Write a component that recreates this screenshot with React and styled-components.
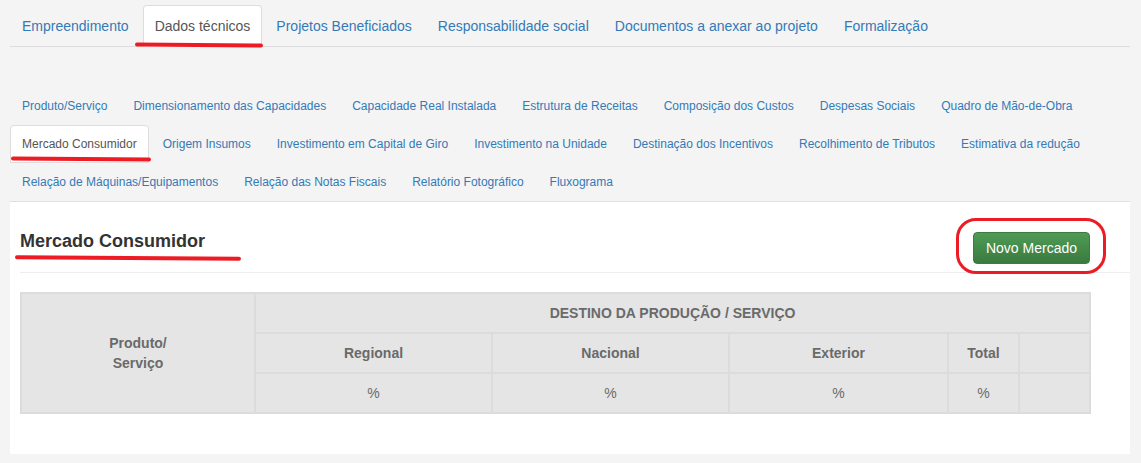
import React from "react";
import styled, { createGlobalStyle } from "styled-components";

const GlobalStyle = createGlobalStyle`
  * { box-sizing: border-box; }
  body {
    margin: 0;
    background: #f4f4f4;
    font-family: "Liberation Sans", Arial, sans-serif;
    color: #333;
  }
`;

const mainTabs = [
  "Empreendimento",
  "Dados técnicos",
  "Projetos Beneficiados",
  "Responsabilidade social",
  "Documentos a anexar ao projeto",
  "Formalização"
];

const subTabs = [
  "Produto/Serviço",
  "Dimensionamento das Capacidades",
  "Capacidade Real Instalada",
  "Estrutura de Receitas",
  "Composição dos Custos",
  "Despesas Sociais",
  "Quadro de Mão-de-Obra",
  "Mercado Consumidor",
  "Origem Insumos",
  "Investimento em Capital de Giro",
  "Investimento na Unidade",
  "Destinação dos Incentivos",
  "Recolhimento de Tributos",
  "Estimativa da redução",
  "Relação de Máquinas/Equipamentos",
  "Relação das Notas Fiscais",
  "Relatório Fotográfico",
  "Fluxograma"
];

export default function App() {
  return (
    <Page>
      <GlobalStyle />
      <MainNav>
        {mainTabs.map((t) => (
          <MainTab key={t} $active={t === "Dados técnicos"}>
            {t}
          </MainTab>
        ))}
      </MainNav>

      <SubNav>
        {subTabs.map((t) => (
          <SubTab key={t} $active={t === "Mercado Consumidor"}>
            {t}
          </SubTab>
        ))}
      </SubNav>

      <Panel>
        <HeaderRow>
          <Heading>Mercado Consumidor</Heading>
          <Button>Novo Mercado</Button>
        </HeaderRow>

        <Table>
          <colgroup>
            <col style={{ width: 234 }} />
            <col style={{ width: 237 }} />
            <col style={{ width: 237 }} />
            <col style={{ width: 219 }} />
            <col style={{ width: 71 }} />
            <col style={{ width: 71 }} />
          </colgroup>
          <tbody>
            <tr>
              <Th rowSpan={3}>
                Produto/
                <br />
                Serviço
              </Th>
              <Th colSpan={5}>DESTINO DA PRODUÇÃO / SERVIÇO</Th>
            </tr>
            <tr>
              <Th>Regional</Th>
              <Th>Nacional</Th>
              <Th>Exterior</Th>
              <Th>Total</Th>
              <Th />
            </tr>
            <tr>
              <Td>%</Td>
              <Td>%</Td>
              <Td>%</Td>
              <Td>%</Td>
              <Td />
            </tr>
          </tbody>
        </Table>
      </Panel>

      {/* hand-drawn red annotations */}
      <Underline $left={135} $top={43} $width={128} />
      <Underline $left={11} $top={157} $width={140} />
      <Underline $left={15} $top={256} $width={226} />
      <Circle />
    </Page>
  );
}

const Page = styled.div`
  position: relative;
  padding: 5px 11px 8px 10px;
`;

const MainNav = styled.ul`
  display: flex;
  list-style: none;
  margin: 0;
  padding: 0;
  border-bottom: 1px solid #ddd;
`;

const MainTab = styled.li`
  font-size: 14px;
  line-height: 20px;
  padding: 10px 11px;
  margin: 0 2px -1px 0;
  border: 1px solid ${(p) => (p.$active ? "#ddd" : "transparent")};
  border-bottom-color: transparent;
  border-radius: 4px 4px 0 0;
  background: ${(p) => (p.$active ? "#fff" : "transparent")};
  color: ${(p) => (p.$active ? "#555" : "#337ab7")};
  white-space: nowrap;
`;

const SubNav = styled.ul`
  display: flex;
  flex-wrap: wrap;
  list-style: none;
  margin: 40px 0 0;
  padding: 0;
`;

const SubTab = styled.li`
  font-size: 12px;
  line-height: 17px;
  padding: 10px 11px 9px;
  margin-right: 2px;
  border: 1px solid ${(p) => (p.$active ? "#ddd" : "transparent")};
  border-radius: 4px 4px 0 0;
  background: ${(p) => (p.$active ? "#fff" : "transparent")};
  color: ${(p) => (p.$active ? "#555" : "#337ab7")};
  white-space: nowrap;
`;

const Panel = styled.div`
  background: #fff;
  border-top: 1px solid #e0e0e0;
  padding: 0 0 40px 10px;
`;

const HeaderRow = styled.div`
  display: flex;
  justify-content: space-between;
  align-items: flex-start;
  padding: 29px 40px 8px 0;
  border-bottom: 1px solid #eee;
`;

const Heading = styled.h3`
  margin: 0;
  font-size: 18px;
  line-height: 20px;
  font-weight: bold;
  color: #333;
`;

const Button = styled.button`
  margin-top: 1px;
  height: 32px;
  padding: 0 12px;
  font-family: inherit;
  font-size: 14px;
  color: #fff;
  border: 1px solid #3b7c40;
  border-radius: 4px;
  background: linear-gradient(#4f9b55, #3a7a3f);
`;

const Table = styled.table`
  width: 1069px;
  margin-top: 19px;
  border-collapse: collapse;
  table-layout: fixed;
  background: #e5e5e5;
`;

const Th = styled.th`
  height: 40px;
  padding: 0 8px;
  border: 2px solid #dcdcdc;
  font-size: 14px;
  line-height: 20px;
  font-weight: bold;
  color: #6a6a6a;
  text-align: center;
`;

const Td = styled.td`
  height: 40px;
  padding: 0 8px;
  border: 2px solid #dcdcdc;
  font-size: 14px;
  color: #6a6a6a;
  text-align: center;
`;

const Underline = styled.div`
  position: absolute;
  left: ${(p) => p.$left}px;
  top: ${(p) => p.$top}px;
  width: ${(p) => p.$width}px;
  height: 4px;
  border-radius: 3px;
  background: #ed1c24;
  transform: rotate(0.4deg);
`;

const Circle = styled.div`
  position: absolute;
  left: 956px;
  top: 218px;
  width: 150px;
  height: 56px;
  border: 3px solid #ed1c24;
  border-radius: 20px;
`;
